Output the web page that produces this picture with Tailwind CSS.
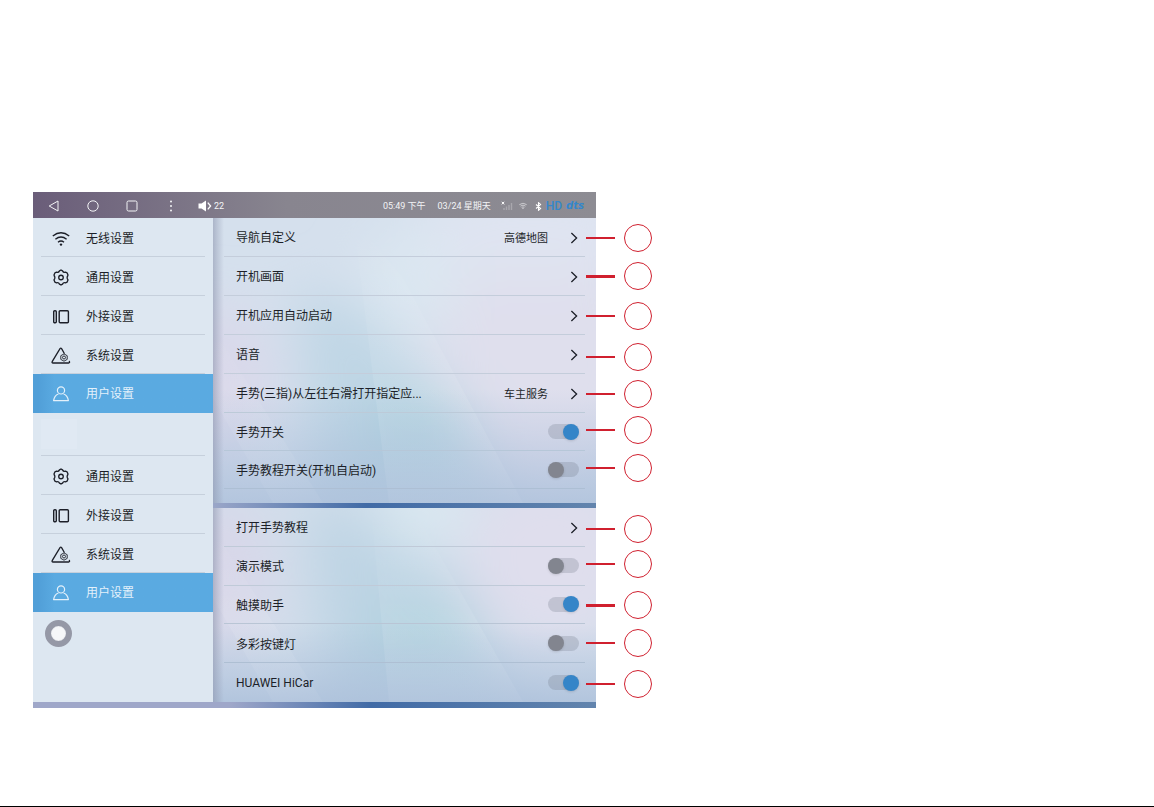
<!DOCTYPE html>
<html lang="zh-CN">
<head>
    <meta charset="UTF-8">
    <meta name="viewport" content="width=device-width, initial-scale=1.0">
    <title>用户设置</title>
    <script src="https://cdn.jsdelivr.net/npm/@tailwindcss/browser@4"></script>
</head>
<body class="min-h-screen flex flex-col bg-white border-b border-black font-[Roboto,'Noto_Sans_CJK_SC',sans-serif] text-xs text-[#1c1f28]">
    <!-- Shared icons -->
    <svg class="hidden">
        <symbol id="i-gear" viewBox="0 0 18 18">
            <path d="M7.4 2 L9 1 L10.6 2 Q11.6 4.2 13.8 3.4 L15.4 4 L16.4 6.4 Q14.6 9 16.4 11.6 L15.4 14 L13.8 14.6 Q11.6 13.8 10.6 16 L9 17 L7.4 16 Q6.4 13.8 4.2 14.6 L2.6 14 L1.6 11.6 Q3.4 9 1.6 6.4 L2.6 4 L4.2 3.4 Q6.4 4.2 7.4 2 Z" fill="none" stroke="currentColor" stroke-width="1.4" stroke-linejoin="round"/>
            <circle cx="9" cy="9" r="2.4" fill="none" stroke="currentColor" stroke-width="1.4"/>
        </symbol>
        <symbol id="i-panel" viewBox="0 0 16 16">
            <rect x=".7" y="1.8" width="2.6" height="12" rx="1" fill="none" stroke="currentColor" stroke-width="1.4"/>
            <rect x="6.2" y="1.8" width="9.2" height="12" rx="1" fill="none" stroke="currentColor" stroke-width="1.4"/>
        </symbol>
        <symbol id="i-system" viewBox="0 0 20 18">
            <path d="M13.2 6.2 L10.6 1.6 Q9.8 .6 9 1.6 L1.2 14.6 Q.7 16 2 16 H17.6 Q19 15.9 18.4 14.4" fill="none" stroke="currentColor" stroke-width="1.3" stroke-linecap="round"/>
            <path d="M13 6.9 L16.2 8.7 V12.4 L13 14.2 L9.8 12.4 V8.7 Z" fill="none" stroke="currentColor" stroke-width=".9"/>
            <circle cx="13" cy="10.5" r="1.5" fill="none" stroke="currentColor" stroke-width=".9"/>
        </symbol>
        <symbol id="i-user" viewBox="0 0 16 16">
            <circle cx="8" cy="4.4" r="3.6" fill="none" stroke="currentColor" stroke-width="1.2"/>
            <path d="M5.4 8 Q1.4 9.4 .6 14.6 H15.4 Q14.6 9.4 10.6 8" fill="none" stroke="currentColor" stroke-width="1.2" stroke-linejoin="round"/>
        </symbol>
        <symbol id="i-wifi" viewBox="0 0 18 16">
            <path d="M.8 5 Q9 -1.6 17.2 5 M3.4 8.2 Q9 3.8 14.6 8.2 M6 11.2 Q9 8.8 12 11.2" fill="none" stroke="currentColor" stroke-width="1.4"/>
            <circle cx="9" cy="13.6" r="1.2" fill="currentColor"/>
        </symbol>
        <symbol id="i-next" viewBox="0 0 8 12">
            <path d="M1.4 1 L6.6 6 L1.4 11" fill="none" stroke="currentColor" stroke-width="1.3"/>
        </symbol>
    </svg>

    <main class="pt-[192px] pl-[33px]">
        <div class="relative w-[calc(50vw-14px)]">
            <!-- Status bar -->
            <header class="h-[26px] flex items-center pt-0.5 pl-[15px] pr-3 text-[9px] text-gray-100 bg-linear-to-r from-[#6a5d79] via-[#88858f] via-45% to-[#8d8c93]">
                <div class="flex items-center gap-[27px]">
                    <button aria-label="返回"><svg class="size-3" viewBox="0 0 12 12"><path d="M10 1 V11 L1.2 6 Z" fill="none" stroke="currentColor" stroke-linejoin="round"/></svg></button>
                    <button aria-label="主页"><svg class="size-3" viewBox="0 0 12 12"><circle cx="6" cy="6" r="5.2" fill="none" stroke="currentColor"/></svg></button>
                    <button aria-label="最近任务"><svg class="size-3" viewBox="0 0 12 12"><rect x="1" y="1" width="10" height="10" rx="1.5" fill="none" stroke="currentColor"/></svg></button>
                    <button aria-label="更多"><svg class="size-3" viewBox="0 0 12 12"><g fill="currentColor"><circle cx="6" cy="1.6" r="1"/><circle cx="6" cy="6" r="1"/><circle cx="6" cy="10.4" r="1"/></g></svg></button>
                </div>
                <div class="ml-[21px] flex items-center gap-0.5">
                    <svg class="w-[14px] h-3 text-white" viewBox="0 0 14 12"><path d="M.5 3.4 H3.5 L8 .6 V11.4 L3.5 8.6 H.5 Z" fill="currentColor"/><path d="M9.8 2.6 L12.6 6 L9.8 9.4" fill="none" stroke="currentColor" stroke-width="1.3"/></svg>
                    22
                </div>
                <div class="ml-auto flex items-center">
                    <span>05:49 下午</span>
                    <span class="ml-3">03/24 星期天</span>
                    <svg class="ml-2.5 w-3 h-2.5 text-white" viewBox="0 0 12 10"><path d="M.8 .8 L3.2 3.4 M3.2 .8 L.8 3.4" stroke="currentColor" stroke-width="1"/><path d="M3 9 V7 M5.5 9 V5.5 M8 9 V4 M10.5 9 V2" stroke="currentColor" stroke-opacity=".25" stroke-width="1.4"/></svg>
                    <svg class="ml-1.5 w-2 h-2.5" viewBox="0 0 18 16"><use href="#i-wifi"/></svg>
                    <svg class="ml-2 w-[7px] h-[9px] text-white" viewBox="0 0 7 9"><path d="M1 2.5 L5.6 6.4 L3.5 8.3 V.7 L5.6 2.6 L1 6.5" fill="none" stroke="currentColor" stroke-width="1.1"/></svg>
                    <!-- HD and dts marks -->
                    <span class="ml-1 text-xs leading-none font-medium text-[#3487cb]">HD</span>
                    <span class="ml-1 font-['DejaVu_Sans',sans-serif] text-[10px] leading-none font-bold italic text-[#3487cb]">dts</span>
                </div>
            </header>

            <div class="flex">
                <!-- Sidebar -->
                <nav class="w-[180px] shrink-0 bg-[#dde7f1]">
                    <a href="#wireless" class="h-[39px] flex items-center px-2">
                        <span class="h-full flex-1 flex items-center gap-[15px] pt-[3px] pl-2.5 border-b border-[#c6d0dc]"><svg class="w-5 h-4"><use href="#i-wifi"/></svg>无线设置</span>
                    </a>
                    <a href="#general" class="h-[39px] flex items-center px-2">
                        <span class="h-full flex-1 flex items-center gap-[15px] pt-[3px] pl-2.5 border-b border-[#c6d0dc]"><svg class="w-5 h-[17px]"><use href="#i-gear"/></svg>通用设置</span>
                    </a>
                    <a href="#external" class="h-[39px] flex items-center px-2">
                        <span class="h-full flex-1 flex items-center gap-[15px] pt-[3px] pl-2.5 border-b border-[#c6d0dc]"><svg class="w-5 h-4"><use href="#i-panel"/></svg>外接设置</span>
                    </a>
                    <a href="#system" class="h-[39px] flex items-center px-2">
                        <span class="h-full flex-1 flex items-center gap-[15px] pt-[3px] pl-2.5 border-b border-[#c6d0dc]"><svg class="w-5 h-[18px]"><use href="#i-system"/></svg>系统设置</span>
                    </a>
                    <a href="#user" class="h-[39px] flex items-center gap-[15px] pt-px pl-[18px] text-[#e4f1fb] bg-linear-to-r from-[#519fd8] from-3% to-[#5aaae1] to-12%">
                        <svg class="w-5 h-4"><use href="#i-user"/></svg>用户设置
                    </a>
                    <div class="h-[43px] px-2">
                        <div class="h-full pt-1.5 border-b border-[#c6d0dc]"><div class="w-9 h-[30px] bg-[#e0e9f3]"></div></div>
                    </div>
                    <a href="#general" class="h-[39px] flex items-center px-2">
                        <span class="h-full flex-1 flex items-center gap-[15px] pt-[3px] pl-2.5 border-b border-[#c6d0dc]"><svg class="w-5 h-[17px]"><use href="#i-gear"/></svg>通用设置</span>
                    </a>
                    <a href="#external" class="h-[39px] flex items-center px-2">
                        <span class="h-full flex-1 flex items-center gap-[15px] pt-[3px] pl-2.5 border-b border-[#c6d0dc]"><svg class="w-5 h-4"><use href="#i-panel"/></svg>外接设置</span>
                    </a>
                    <a href="#system" class="h-[39px] flex items-center px-2">
                        <span class="h-full flex-1 flex items-center gap-[15px] pt-[3px] pl-2.5 border-b border-[#c6d0dc]"><svg class="w-5 h-[18px]"><use href="#i-system"/></svg>系统设置</span>
                    </a>
                    <a href="#user" class="h-[39px] flex items-center gap-[15px] pt-px pl-[18px] text-[#e4f1fb] bg-linear-to-r from-[#519fd8] from-3% to-[#5aaae1] to-12%">
                        <svg class="w-5 h-4"><use href="#i-user"/></svg>用户设置
                    </a>
                    <div class="h-[90px] pt-2 pl-3">
                        <button aria-label="触摸助手" class="size-[27px] rounded-full border-[6px] border-[#9598a6] bg-[#f6f7f9] shadow-[inset_0_0_1px_#b4b7c4]"></button>
                    </div>
                </nav>

                <div class="flex-1 flex flex-col min-w-0">
                    <!-- Settings, upper part -->
                    <section class="relative isolate h-[285px] px-[11px] bg-[#d5e0ed]">
                        <svg class="absolute inset-0 -z-10 size-full" viewBox="0 0 383 285" preserveAspectRatio="none">
                            <defs>
                                <filter id="soft" x="-50%" y="-50%" width="200%" height="200%"><feGaussianBlur stdDeviation="26"/></filter>
                                <linearGradient id="edge"><stop offset="0" stop-color="#8a92ab" stop-opacity=".55"/><stop offset=".35" stop-color="#8a92ab" stop-opacity=".35"/><stop offset="1" stop-color="#8a92ab" stop-opacity="0"/></linearGradient>
                                <linearGradient id="fade" x2="0" y2="1"><stop offset=".6" stop-color="#9db4d4" stop-opacity="0"/><stop offset="1" stop-color="#9db4d4" stop-opacity=".6"/></linearGradient>
                                <linearGradient id="ray" x2="0" y2="1"><stop offset="0" stop-color="#fff" stop-opacity="0"/><stop offset="1" stop-color="#fff" stop-opacity=".16"/></linearGradient>
                            </defs>
                            <g filter="url(#soft)">
                                <ellipse cx="5" cy="165" rx="55" ry="80" fill="#d9d8ea"/>
                                <ellipse cx="325" cy="130" rx="105" ry="140" fill="#dfdfed"/>
                                <ellipse cx="320" cy="10" rx="120" ry="50" fill="#dfe4f1"/>
                                <path d="M85 70 L150 90 L245 190 L300 285 H100 Z" fill="#bfd6e5"/>
                                <ellipse cx="205" cy="210" rx="55" ry="40" fill="#b0d2df"/>
                                <ellipse cx="200" cy="60" rx="50" ry="50" fill="#dbe7f1"/>
                            </g>
                            <path d="M140 0 L176 285 H310 L190 60 Z" fill="url(#ray)"/>
                            <path d="M0 110 L110 285 H60 L0 180 Z" fill="url(#ray)"/>
                            <rect width="383" height="285" fill="url(#fade)"/>
                            <rect width="11" height="285" fill="url(#edge)"/>
                        </svg>
                        <button class="w-full h-[39px] flex items-center pt-0.5 pl-3 pr-[7px] border-b border-[#c4cddb]">导航自定义<span class="ml-auto mr-[22px] pt-0.5 text-[11px]">高德地图</span><svg class="w-2 h-3"><use href="#i-next"/></svg></button>
                        <button class="w-full h-[39px] flex items-center justify-between pt-0.5 pl-3 pr-[7px] border-b border-[#c4cddb]">开机画面<svg class="w-2 h-3"><use href="#i-next"/></svg></button>
                        <button class="w-full h-[39px] flex items-center justify-between pt-0.5 pl-3 pr-[7px] border-b border-[#c4cddb]">开机应用自动启动<svg class="w-2 h-3"><use href="#i-next"/></svg></button>
                        <button class="w-full h-[39px] flex items-center justify-between pt-0.5 pl-3 pr-[7px] border-b border-[#c4cddb]">语音<svg class="w-2 h-3"><use href="#i-next"/></svg></button>
                        <button class="w-full h-[39px] flex items-center pt-0.5 pl-3 pr-[7px] border-b border-[#bccad8]">手势(三指)从左往右滑打开指定应...<span class="ml-auto mr-[22px] pt-0.5 text-[11px]">车主服务</span><svg class="w-2 h-3"><use href="#i-next"/></svg></button>
                        <div class="h-[38px] flex items-center justify-between pl-3 pr-[6px] border-b border-[#b6c7d8]">
                            <label for="gesture" class="pt-[3px]">手势开关</label>
                            <input type="checkbox" id="gesture" checked class="appearance-none w-[31px] h-[15px] flex items-center rounded-full bg-gray-500/25 before:block before:size-4 before:shrink-0 before:rounded-full before:bg-[#82858f] before:shadow-sm checked:justify-end checked:before:bg-[#3585c8]">
                        </div>
                        <div class="h-[38px] flex items-center justify-between pl-3 pr-[6px] border-b border-[#adbfd4]">
                            <label for="tutorial" class="pt-[3px]">手势教程开关(开机自启动)</label>
                            <input type="checkbox" id="tutorial" class="appearance-none w-[31px] h-[15px] flex items-center rounded-full bg-gray-500/25 before:block before:size-4 before:shrink-0 before:rounded-full before:bg-[#82858f] before:shadow-sm checked:justify-end checked:before:bg-[#3585c8]">
                        </div>
                    </section>
                    <div class="h-[5px] bg-linear-to-r from-[#9aa6c8] via-[#416ba6] via-40% to-[#6284ad]"></div>

                    <!-- Settings, lower part -->
                    <section class="relative isolate flex-1 grid grid-rows-5 px-[11px] bg-[#d2deeb]">
                        <svg class="absolute inset-0 -z-10 size-full" viewBox="0 0 383 194" preserveAspectRatio="none">
                            <g filter="url(#soft)">
                                <ellipse cx="5" cy="70" rx="55" ry="80" fill="#d8d7e9"/>
                                <ellipse cx="340" cy="50" rx="90" ry="90" fill="#dfdeed"/>
                                <path d="M95 0 H150 L260 90 L300 194 H110 Z" fill="#bed4e4"/>
                                <ellipse cx="210" cy="125" rx="58" ry="32" fill="#afd1de"/>
                                <ellipse cx="210" cy="0" rx="50" ry="40" fill="#dae8f1"/>
                            </g>
                            <path d="M158 0 L176 194 H310 L200 0 Z" fill="url(#ray)"/>
                            <path d="M0 20 L110 194 H60 L0 90 Z" fill="url(#ray)"/>
                            <rect width="383" height="194" fill="url(#fade)"/>
                            <rect width="11" height="194" fill="url(#edge)"/>
                        </svg>
                        <button class="w-full flex items-center justify-between pt-0.5 pl-3 pr-[7px] border-b border-[#c0cad8]">打开手势教程<svg class="w-2 h-3"><use href="#i-next"/></svg></button>
                        <div class="flex items-center justify-between pl-3 pr-[6px] border-b border-[#c0cad8]">
                            <label for="demo" class="pt-[3px]">演示模式</label>
                            <input type="checkbox" id="demo" class="appearance-none w-[31px] h-[15px] flex items-center rounded-full bg-gray-500/25 before:block before:size-4 before:shrink-0 before:rounded-full before:bg-[#82858f] before:shadow-sm checked:justify-end checked:before:bg-[#3585c8]">
                        </div>
                        <div class="flex items-center justify-between pl-3 pr-[6px] border-b border-[#b9c5d5]">
                            <label for="touch" class="pt-[3px]">触摸助手</label>
                            <input type="checkbox" id="touch" checked class="appearance-none w-[31px] h-[15px] flex items-center rounded-full bg-gray-500/25 before:block before:size-4 before:shrink-0 before:rounded-full before:bg-[#82858f] before:shadow-sm checked:justify-end checked:before:bg-[#3585c8]">
                        </div>
                        <div class="flex items-center justify-between pl-3 pr-[6px] border-b border-[#aebfd3]">
                            <label for="keylight" class="pt-[3px]">多彩按键灯</label>
                            <input type="checkbox" id="keylight" class="appearance-none w-[31px] h-[15px] flex items-center rounded-full bg-gray-500/25 before:block before:size-4 before:shrink-0 before:rounded-full before:bg-[#82858f] before:shadow-sm checked:justify-end checked:before:bg-[#3585c8]">
                        </div>
                        <div class="flex items-center justify-between pl-3 pr-[6px]">
                            <label for="hicar">HUAWEI HiCar</label>
                            <input type="checkbox" id="hicar" checked class="appearance-none w-[31px] h-[15px] flex items-center rounded-full bg-gray-500/25 before:block before:size-4 before:shrink-0 before:rounded-full before:bg-[#82858f] before:shadow-sm checked:justify-end checked:before:bg-[#3585c8]">
                        </div>
                    </section>
                </div>
            </div>
            <div class="h-1.5 bg-linear-to-r from-[#9fa7c9] from-35% via-[#416ba6] via-60% to-[#6284ad]"></div>

            <!-- Callouts over the right edge of the screen -->
            <ul class="absolute top-0 left-full -ml-2.5 text-[#d0202f]">
                <li class="absolute top-[32px] flex items-center gap-[9px]"><i class="w-[29px] h-0.5 bg-current"></i><i class="size-7 rounded-full border border-current"></i></li>
                <li class="absolute top-[70px] flex items-center gap-[9px]"><i class="w-[29px] h-[3px] bg-current"></i><i class="size-7 rounded-full border border-current"></i></li>
                <li class="absolute top-[110px] flex items-center gap-[9px]"><i class="w-[29px] h-0.5 bg-current"></i><i class="size-7 rounded-full border border-current"></i></li>
                <li class="absolute top-[151px] flex items-center gap-[9px]"><i class="w-[29px] h-0.5 bg-current"></i><i class="size-7 rounded-full border border-current"></i></li>
                <li class="absolute top-[188px] flex items-center gap-[9px]"><i class="w-[29px] h-0.5 bg-current"></i><i class="size-7 rounded-full border border-current"></i></li>
                <li class="absolute top-[224px] flex items-center gap-[9px]"><i class="w-[29px] h-0.5 bg-current"></i><i class="size-7 rounded-full border border-current"></i></li>
                <li class="absolute top-[262px] flex items-center gap-[9px]"><i class="w-[29px] h-0.5 bg-current"></i><i class="size-7 rounded-full border border-current"></i></li>
                <li class="absolute top-[323px] flex items-center gap-[9px]"><i class="w-[29px] h-0.5 bg-current"></i><i class="size-7 rounded-full border border-current"></i></li>
                <li class="absolute top-[358px] flex items-center gap-[9px]"><i class="w-[29px] h-0.5 bg-current"></i><i class="size-7 rounded-full border border-current"></i></li>
                <li class="absolute top-[399px] flex items-center gap-[9px]"><i class="w-[29px] h-[3px] bg-current"></i><i class="size-7 rounded-full border border-current"></i></li>
                <li class="absolute top-[437px] flex items-center gap-[9px]"><i class="w-[29px] h-0.5 bg-current"></i><i class="size-7 rounded-full border border-current"></i></li>
                <li class="absolute top-[478px] flex items-center gap-[9px]"><i class="w-[29px] h-0.5 bg-current"></i><i class="size-7 rounded-full border border-current"></i></li>
            </ul>
        </div>
    </main>
</body>
</html>
